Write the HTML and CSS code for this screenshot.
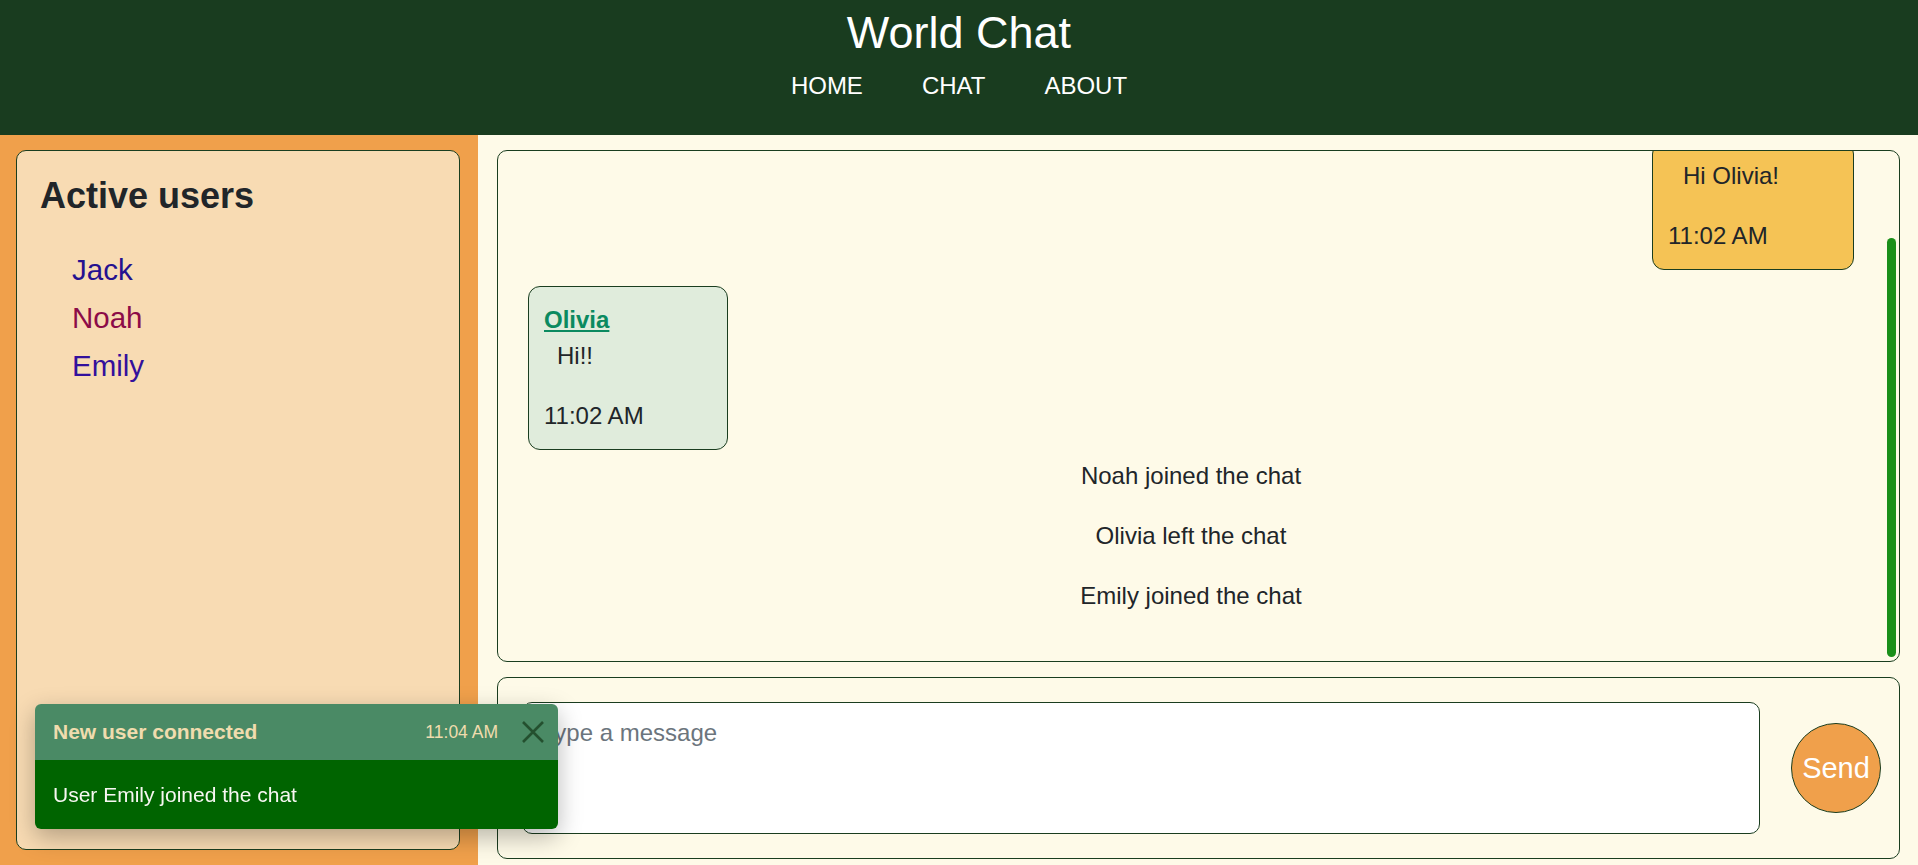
FILE: index.html
```html
<!DOCTYPE html>
<html lang="en">
<head>
<meta charset="utf-8">
<title>World Chat</title>
<link rel="stylesheet" href="styles.css">
</head>
<body>
<header class="topbar">
  <h1 class="brand">World Chat</h1>
  <nav class="nav">
    <a href="#" class="nav-link">HOME</a>
    <a href="#" class="nav-link">CHAT</a>
    <a href="#" class="nav-link">ABOUT</a>
  </nav>
</header>

<main class="layout">
  <aside class="sidebar">
    <div class="users-card">
      <h2 class="users-title">Active users</h2>
      <ul class="users-list">
        <li class="user user-jack">Jack</li>
        <li class="user user-noah">Noah</li>
        <li class="user user-emily">Emily</li>
      </ul>
    </div>
  </aside>

  <section class="chat">
    <div class="messages">
      <div class="scroll">
        <div class="thread">
          <div class="bubble bubble-mine">
            <p class="bubble-text">Hi Olivia!</p>
            <div class="bubble-time">11:02 AM</div>
          </div>
          <div class="bubble bubble-theirs">
            <a href="#" class="bubble-name">Olivia</a>
            <p class="bubble-text">Hi!!</p>
            <div class="bubble-time">11:02 AM</div>
          </div>
          <p class="system">Noah joined the chat</p>
          <p class="system">Olivia left the chat</p>
          <p class="system">Emily joined the chat</p>
        </div>
      </div>
      <div class="scrollbar">
        <div class="scrollbar-thumb"></div>
      </div>
    </div>

    <form class="composer">
      <textarea class="composer-input" placeholder="Type a message"></textarea>
      <button type="button" class="send-btn">Send</button>
    </form>
  </section>
</main>

<div class="toast">
  <div class="toast-header">
    <strong class="toast-title">New user connected</strong>
    <small class="toast-time">11:04 AM</small>
    <button type="button" class="toast-close" aria-label="Close">
      <svg viewBox="0 0 22 22" width="22" height="22">
        <path d="M1 1 L21 21 M21 1 L1 21" stroke="#24502f" stroke-width="2.6" fill="none"/>
      </svg>
    </button>
  </div>
  <div class="toast-body">User Emily joined the chat</div>
</div>
</body>
</html>
```

FILE: styles.css
```css
* {
  box-sizing: border-box;
}

html, body {
  margin: 0;
  padding: 0;
}

body {
  font-family: "Liberation Sans", Arial, sans-serif;
  color: #212529;
  background: #fefae8;
  height: 865px;
  overflow: hidden;
}

/* Header */
.topbar {
  height: 135px;
  background: #193c1f;
  padding-top: 6px;
  display: flex;
  flex-direction: column;
  align-items: center;
}

.brand {
  margin: 0;
  font-size: 45px;
  font-weight: 400;
  line-height: 54px;
  color: #ffffff;
}

.nav {
  margin-top: 8px;
  display: flex;
  gap: 59px;
}

.nav-link {
  color: #ffffff;
  text-decoration: none;
  font-size: 24px;
  line-height: 35px;
}

/* Layout */
.layout {
  display: flex;
  height: 730px;
}

.sidebar {
  width: 478px;
  flex: none;
  background: #f0a04b;
  padding: 15px 18px 15px 16px;
}

.users-card {
  height: 100%;
  background: #f8dbb3;
  border: 1px solid #1a3d1f;
  border-radius: 10px;
  padding: 23px;
}

.users-title {
  margin: 0 0 29px;
  font-size: 36px;
  font-weight: 700;
  line-height: 43px;
  color: #212529;
}

.users-list {
  list-style: none;
  margin: 0;
  padding-left: 32px;
}

.user {
  font-size: 29.5px;
  line-height: 48px;
}

.user-jack { color: #251190; }
.user-noah { color: #8c0c48; }
.user-emily { color: #33109c; }

/* Chat area */
.chat {
  flex: 1;
  background: #fefae8;
  padding: 15px 18px 6px 19px;
  display: flex;
  flex-direction: column;
  gap: 15px;
}

.messages {
  height: 512px;
  flex: none;
  border: 1px solid #1a3d1f;
  border-radius: 10px;
  padding-right: 3px;
  overflow: hidden;
  display: flex;
}

.scroll {
  flex: 1;
  min-width: 0;
  overflow: hidden;
  display: flex;
  flex-direction: column;
  justify-content: flex-end;
}

.scrollbar {
  width: 9px;
  flex: none;
  padding: 4px 0;
  display: flex;
  flex-direction: column;
  justify-content: flex-end;
}

.scrollbar-thumb {
  height: 419px;
  background: #1a8f1a;
  border-radius: 5px;
}

.thread {
  flex: none;
  display: flex;
  flex-direction: column;
  padding: 23px 33px 23px 30px;
}

.system {
  margin: 0 0 24px;
  font-size: 24px;
  line-height: 36px;
  text-align: center;
  color: #212529;
}

.bubble {
  width: 202px;
  margin: 8px 0;
  padding: 15px;
  border: 1px solid #1a3d1f;
  border-radius: 12px;
  font-size: 24px;
  line-height: 36px;
}

.bubble-mine {
  align-self: flex-end;
  background: #f5c355;
}

.bubble-theirs {
  align-self: flex-start;
  background: #e0ecdc;
  width: 200px;
}

.bubble-name {
  display: block;
  font-weight: 700;
  color: #0b8a60;
  text-decoration: underline;
}

.bubble-text {
  margin: 0 0 24px;
  padding-left: 13px;
}

.bubble-mine .bubble-text {
  padding-left: 15px;
}

.bubble-time {
  margin: 0;
}

/* Composer */
.composer {
  height: 182px;
  flex: none;
  margin: 0;
  border: 1px solid #1a3d1f;
  border-radius: 10px;
  padding: 24px 18px 24px 24px;
  display: flex;
  align-items: center;
  gap: 31px;
}

.composer-input {
  flex: 1;
  height: 132px;
  resize: none;
  border: 1px solid #1a3d1f;
  border-radius: 10px;
  background: #ffffff;
  padding: 12px 18px;
  font-family: "Liberation Sans", Arial, sans-serif;
  font-size: 24px;
  line-height: 36px;
  color: #212529;
  outline: none;
}

.composer-input::placeholder {
  color: #6c757d;
}

.send-btn {
  width: 90px;
  height: 90px;
  flex: none;
  border-radius: 50%;
  border: 1px solid #1a3d1f;
  background: #f0a04b;
  color: #ffffff;
  font-family: "Liberation Sans", Arial, sans-serif;
  font-size: 29px;
  padding: 0;
  cursor: pointer;
}

/* Toast */
.toast {
  position: fixed;
  left: 35px;
  top: 704px;
  width: 523px;
  border-radius: 6px;
  overflow: hidden;
  box-shadow: 0 8px 24px rgba(0, 0, 0, 0.28);
}

.toast-header {
  height: 56px;
  background: #4a8a65;
  display: flex;
  align-items: center;
  padding: 0 14px 0 18px;
}

.toast-title {
  font-size: 21px;
  font-weight: 700;
  color: #f0dcae;
}

.toast-time {
  margin-left: auto;
  font-size: 17.5px;
  color: #f0dcae;
}

.toast-close {
  margin-left: 24px;
  width: 22px;
  height: 22px;
  padding: 0;
  border: 0;
  background: transparent;
  display: flex;
}

.toast-body {
  background: #006400;
  color: #f7f7f2;
  font-size: 21px;
  line-height: 33px;
  padding: 18px;
}
```
